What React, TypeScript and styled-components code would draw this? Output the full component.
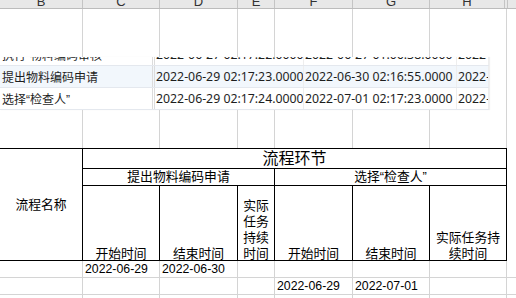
import React from 'react';
import styled, { createGlobalStyle } from 'styled-components';

const GRID = '#d4d4d4';
const INK = '#000';
const CJK = '"Liberation Sans", "Noto Sans CJK SC", sans-serif';

// sheet columns B..H, widths include the right-hand gridline
const widths = [83, 77, 78, 37, 78, 77, 77];
const letters = ['B', 'C', 'D', 'E', 'F', 'G', 'H'];

const GlobalStyle = createGlobalStyle`
  html, body {
    margin: 0;
    padding: 0;
    background: #fff;
  }
  body {
    width: 516px;
    height: 298px;
    overflow: hidden;
    font-family: ${CJK};
  }
  * {
    box-sizing: border-box;
  }
`;

const Sheet = styled.div`
  width: 516px;
  height: 298px;
  overflow: hidden;
  display: flex;
  flex-direction: column;
`;

const HeaderBar = styled.div`
  display: flex;
  flex: none;
  height: 9px;
  background: #e8e8e8;
  border-bottom: 1px solid #bcbcbc;
`;

const HeaderCell = styled.div<{ $w: number }>`
  width: ${(p) => p.$w}px;
  flex: none;
  display: flex;
  justify-content: center;
  align-items: flex-end;
  overflow: hidden;
  border-right: 1px solid #c4c4c4;
  font-family: "Liberation Sans", Arial, sans-serif;
  font-size: 13px;
  line-height: 12px;
  color: #333;
`;

const HeaderTail = styled.div`
  width: 3px;
  flex: none;
  border-right: 1px solid #c4c4c4;
`;

const Band = styled.div<{ $h: number }>`
  display: flex;
  flex: none;
  height: ${(p) => p.$h}px;
`;

const GridCell = styled.div<{ $w: number; $lined?: boolean }>`
  width: ${(p) => p.$w}px;
  flex: none;
  border-right: 1px solid ${GRID};
  border-bottom: ${(p) => (p.$lined ? `1px solid ${GRID}` : 'none')};
  padding-left: 2px;
  display: flex;
  align-items: center;
  white-space: nowrap;
  overflow: hidden;
  font-family: "Liberation Sans", Arial, sans-serif;
  font-size: 12.3px;
  color: ${INK};
`;

const Rest = styled.div<{ $lined?: boolean }>`
  flex: 1;
  border-bottom: ${(p) => (p.$lined ? `1px solid ${GRID}` : 'none')};
`;

/* pasted snapshot of another sheet */
const Snapshot = styled.div`
  width: 489px;
  flex: none;
  overflow: hidden;
  background: #fff;
  box-shadow: 1px 0 1px rgba(0, 0, 0, 0.06);
`;

const SnapRow = styled.div<{ $tint?: boolean; $clipped?: boolean }>`
  display: flex;
  height: 22px;
  margin-top: ${(p) => (p.$clipped ? '-13px' : '0')};
  background: ${(p) => (p.$tint ? '#f2f7fc' : '#fff')};
  border-bottom: 1px solid #e4e8ee;
`;

const SnapCell = styled.div<{ $w?: number; $first?: boolean }>`
  ${(p) => (p.$w ? `width: ${p.$w}px; flex: none;` : 'flex: 1;')}
  display: flex;
  align-items: center;
  padding-left: ${(p) => (p.$first ? 2 : 1)}px;
  border-right: ${(p) => (p.$first ? '3px double #dcdcdc' : '1px solid #eeeeee')};
  white-space: nowrap;
  overflow: hidden;
  font-family: ${(p) => (p.$first ? CJK : '"Noto Sans", sans-serif')};
  font-size: ${(p) => (p.$first ? '12px' : '12.3px')};
  color: #1e1e1e;
`;

const Filler = styled.div`
  width: 18px;
  flex: none;
  border-right: 1px solid ${GRID};
`;

/* bordered process table */
const ProcessTable = styled.div`
  width: 507px;
  flex: none;
  display: grid;
  grid-template-columns: ${widths.map((w) => `${w}px`).join(' ')};
  grid-template-rows: 20px 17px 75px;
  border-top: 1px solid ${INK};
  background: #fff;
`;

const TCell = styled.div<{ $col: string; $row: string; $bottom?: boolean; $size?: number }>`
  grid-column: ${(p) => p.$col};
  grid-row: ${(p) => p.$row};
  border-right: 1px solid ${INK};
  border-bottom: 1px solid ${INK};
  display: flex;
  flex-direction: column;
  align-items: center;
  justify-content: ${(p) => (p.$bottom ? 'flex-end' : 'center')};
  padding: 0 1px;
  text-align: center;
  font-family: ${CJK};
  font-size: ${(p) => p.$size ?? 12.8}px;
  line-height: 16px;
  color: ${INK};
  overflow: hidden;
`;

const TText = styled.span`
  display: block;
  margin-bottom: -2px;
`;

const blank = (h: number, lined = false) => (
  <Band $h={h}>
    {widths.map((w, i) => (
      <GridCell key={i} $w={w} $lined={lined} />
    ))}
    <Rest $lined={lined} />
  </Band>
);

const dataRow = (values: string[]) => (
  <Band $h={17}>
    {widths.map((w, i) => (
      <GridCell key={i} $w={w} $lined>
        {values[i] ?? ''}
      </GridCell>
    ))}
    <Rest $lined />
  </Band>
);

const snapRows = [
  { name: '执行“物料编码审核”', a: '2022-06-27 02:17:22.0000', b: '2022-06-27 01:06:38.0000', clipped: true },
  { name: '提出物料编码申请', a: '2022-06-29 02:17:23.0000', b: '2022-06-30 02:16:55.0000', tint: true },
  { name: '选择“检查人”', a: '2022-06-29 02:17:24.0000', b: '2022-07-01 02:17:23.0000' },
];

export default function App() {
  return (
    <Sheet>
      <GlobalStyle />
      <HeaderBar>
        {widths.map((w, i) => (
          <HeaderCell key={letters[i]} $w={i === 6 ? w - 2 : w}>
            {letters[i]}
          </HeaderCell>
        ))}
        <HeaderTail />
      </HeaderBar>

      {blank(48)}

      <Band $h={53}>
        <Snapshot>
          {snapRows.map((r) => (
            <SnapRow key={r.name} $tint={r.tint} $clipped={r.clipped}>
              <SnapCell $w={155} $first>{r.name}</SnapCell>
              <SnapCell $w={149}>{r.a}</SnapCell>
              <SnapCell $w={153}>{r.b}</SnapCell>
              <SnapCell>2022-06-30</SnapCell>
            </SnapRow>
          ))}
        </Snapshot>
        <Filler />
        <Rest />
      </Band>

      {blank(38)}

      <Band $h={113}>
        <ProcessTable>
          <TCell $col="1" $row="1 / 4">流程名称</TCell>
          <TCell $col="2 / 8" $row="1" $size={16}>
            流程环节
          </TCell>
          <TCell $col="2 / 5" $row="2">提出物料编码申请</TCell>
          <TCell $col="5 / 8" $row="2">选择“检查人”</TCell>
          <TCell $col="2" $row="3" $bottom><TText>开始时间</TText></TCell>
          <TCell $col="3" $row="3" $bottom><TText>结束时间</TText></TCell>
          <TCell $col="4" $row="3" $bottom><TText>实际任务持续时间</TText></TCell>
          <TCell $col="5" $row="3" $bottom><TText>开始时间</TText></TCell>
          <TCell $col="6" $row="3" $bottom><TText>结束时间</TText></TCell>
          <TCell $col="7" $row="3" $bottom><TText>实际任务持续时间</TText></TCell>
        </ProcessTable>
        <Rest />
      </Band>

      {dataRow(['', '2022-06-29', '2022-06-30'])}
      {dataRow(['', '', '', '', '2022-06-29', '2022-07-01'])}
      {blank(17, true)}
    </Sheet>
  );
}
